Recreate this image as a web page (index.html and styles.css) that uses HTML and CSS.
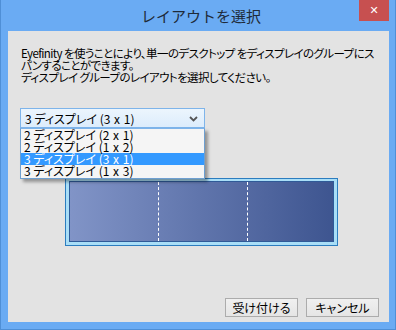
FILE: index.html
```html
<!DOCTYPE html>
<html lang="ja">
<head>
<meta charset="utf-8">
<link rel="stylesheet" href="styles.css">
</head>
<body>
<div class="window">
  <div class="titlebar">
    <div></div>
    <div class="title">レイアウトを選択</div>
    <div class="controls"><div class="close">✕</div></div>
  </div>
  <div class="client">
    <p class="desc">Eyefinity を使うことにより、単一のデスクトップ をディスプレイのグループにスパンすることができます。<br>ディスプレイ グループのレイアウトを選択してください。</p>
    <div class="combo">
      <div class="combo-box">
        <span>3 ディスプレイ <span class="dims">(3 x 1)</span></span>
        <svg class="chev" width="9" height="6" viewBox="0 0 9 6"><path d="M1 1 L4.5 4.5 L8 1" fill="none" stroke="#555" stroke-width="1.8"/></svg>
      </div>
      <ul class="list">
        <li>2 ディスプレイ <span class="dims">(2 x 1)</span></li>
        <li>2 ディスプレイ <span class="dims">(1 x 2)</span></li>
        <li class="sel">3 ディスプレイ <span class="dims">(3 x 1)</span></li>
        <li>3 ディスプレイ <span class="dims">(1 x 3)</span></li>
      </ul>
    </div>
    <div class="preview">
      <div class="screens">
        <div class="scr"></div>
        <div class="scr"></div>
        <div class="scr"></div>
      </div>
    </div>
    <div class="buttons">
      <div class="btn">受け付ける</div>
      <div class="btn">キャンセル</div>
    </div>
  </div>
</div>
</body>
</html>
```
FILE: styles.css
```css
html, body {
  margin: 0;
  padding: 0;
  width: 396px;
  height: 330px;
  overflow: hidden;
  background: #6aabf2;
}
.window {
  box-sizing: border-box;
  width: 396px;
  height: 330px;
  background: #6aabf3;
  border: 1px solid #4f8fd6;
  border-top: none;
  padding: 0 6px 7px 7px;
  display: flex;
  flex-direction: column;
  font-family: "Noto Sans CJK JP", sans-serif;
}
.titlebar {
  height: 31px;
  display: grid;
  grid-template-columns: 1fr auto 1fr;
  align-items: start;
}
.title {
  font-size: 15px;
  line-height: 31px;
  color: #1e2a38;
  padding-left: 5px;
}
.controls {
  display: flex;
  justify-content: flex-end;
}
.close {
  width: 30px;
  height: 21px;
  background: #c75050;
  color: #fff;
  font-size: 11px;
  font-weight: bold;
  line-height: 21px;
  text-align: center;
  font-family: "DejaVu Sans", sans-serif;
}
.client {
  flex: 1;
  background: #e3e3e3;
  display: flex;
  flex-direction: column;
  position: relative;
}
.desc {
  margin: 16px 0 0 13px;
  width: 356px;
  font-size: 11.5px;
  letter-spacing: -0.6px;
  line-height: 12px;
  color: #000;
  font-feature-settings: "palt";
}
.combo {
  position: relative;
  margin: 25px 0 0 12px;
  width: 185px;
}
.combo-box {
  box-sizing: border-box;
  height: 20px;
  border: 1px solid #7eb4ea;
  background: linear-gradient(#ecf5fd, #dcecfc);
  display: flex;
  align-items: center;
  justify-content: space-between;
  padding: 0 6px 0 4px;
  font-size: 12px;
  font-feature-settings: "palt";
}
.dims {
  word-spacing: 1px;
}
.chev { margin-top: 1px; }
.list {
  position: absolute;
  left: 0;
  top: 20px;
  width: 185px;
  box-sizing: border-box;
  margin: 0;
  padding: 0 0 1px 0;
  list-style: none;
  background: #f5f5f5;
  border: 1px solid #6e9fd0;
  border-top: 1px solid #7eb4ea;
  box-shadow: 3px 3px 3px rgba(0,0,0,0.35);
  font-size: 12px;
  line-height: 12px;
  font-feature-settings: "palt";
  z-index: 2;
}
.list li {
  height: 12px;
  padding-left: 3px;
}
.list li.sel {
  background: #3399ff;
  color: #fff;
}
.preview {
  box-sizing: border-box;
  margin: 50px 0 0 57px;
  width: 273px;
  height: 68px;
  border: 1px solid #2c7dbf;
  background: #a9def7;
  padding: 2px 3px 3px 3px;
}
.screens {
  box-sizing: border-box;
  height: 100%;
  border: 1px solid #2f5a98;
  background: linear-gradient(90deg, #8194c7, #3e5590);
  display: grid;
  grid-template-columns: 88px 89px 1fr;
}
.scr + .scr {
  border-left: 1px dashed #ffffff;
}
.buttons {
  margin-top: auto;
  margin-bottom: 5px;
  margin-right: 10px;
  display: flex;
  justify-content: flex-end;
  gap: 8px;
}
.btn {
  box-sizing: border-box;
  width: 73px;
  height: 19px;
  border: 1px solid #acacac;
  background: linear-gradient(#f0f0f0, #e5e5e5);
  font-size: 12px;
  line-height: 17px;
  text-align: center;
  color: #000;
  font-feature-settings: "palt";
}
```
